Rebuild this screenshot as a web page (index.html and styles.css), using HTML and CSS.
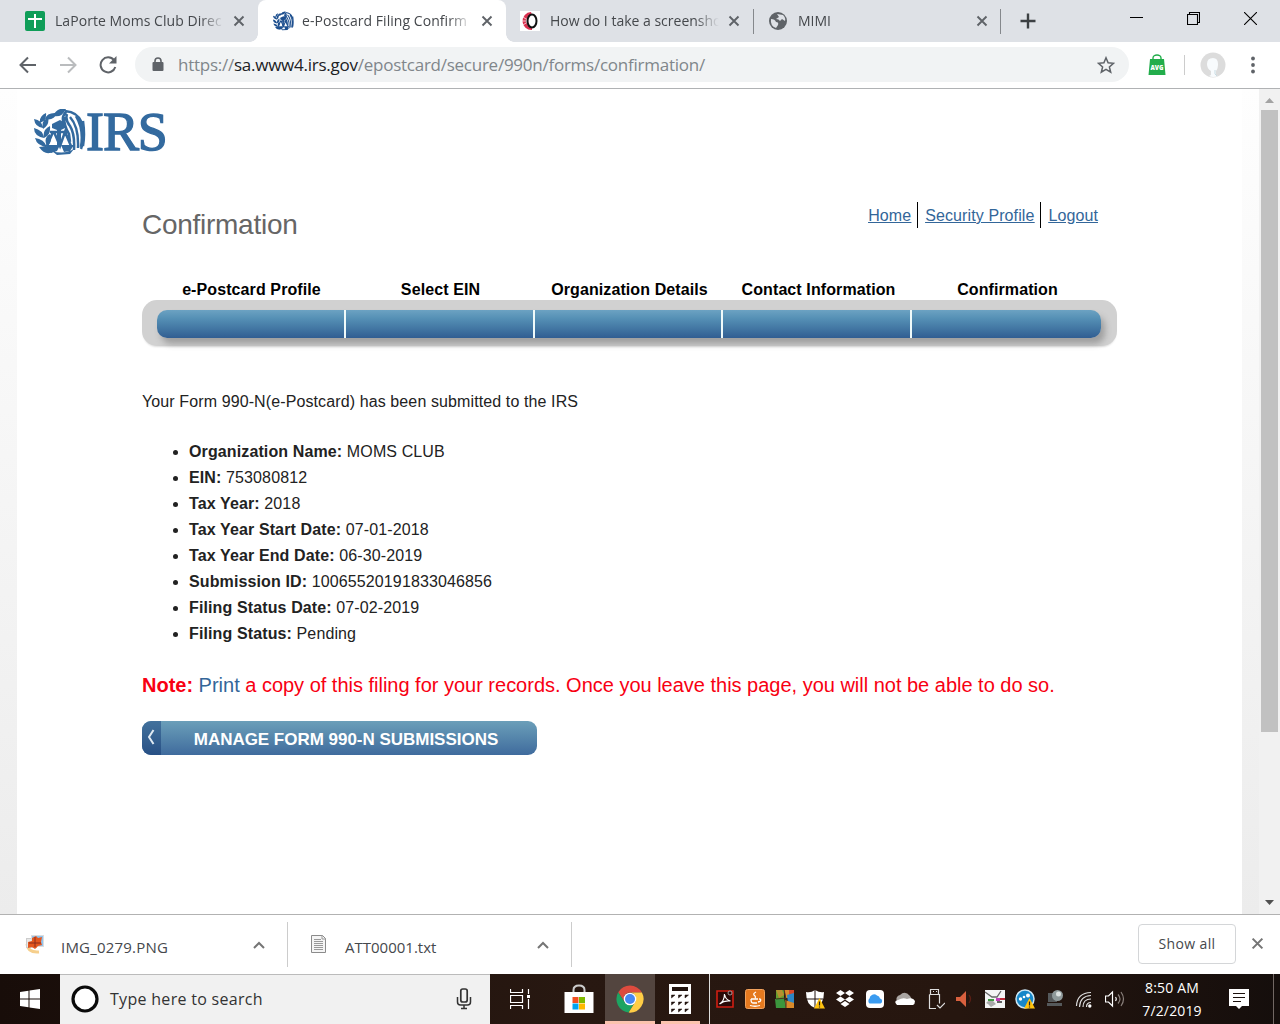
FILE: index.html
```html
<!DOCTYPE html>
<html lang="en">
<head>
<meta charset="utf-8">
<title>e-Postcard Filing Confirmation</title>
<link rel="stylesheet" href="styles.css">
</head>
<body>
<svg class="defs" width="0" height="0">
  <defs>
    <symbol id="eagle" viewBox="0 0 52 46">
      <g fill="currentColor">
        <path d="M0 10q8 1 9 9-8-1-9-9zM0 19q9 2 10 10-10-2-10-10zM1 29q9 1 12 9-10-1-12-9zM5 38q10-2 15 4-8 6-15-4zM9 20q-2-9 5-12 2 8-5 12zM10 29q-2-8 6-12 1 9-6 12zM13 37q-4-8 3-12 3 8-3 12zM11 10q2-7 12-6-3 8-12 6zM19 7q4-9 13-7-4 9-13 7zM6 14q-1-7 6-10 1 7-6 10z"/>
        <path d="M18 15l8-4 5 3v5l-4 2v15h-4V21l-5-2z"/>
        <path d="M11 36h15l-3 6-6 2zM27 36h13l-4 6-6 1zM18 42q12 4 22-2l-4 5-13 1z"/>
      </g>
      <g fill="none" stroke="currentColor" stroke-width="2.500">
        <path d="M16 23h18M19 23l-6 14M20 23l6 14 5-14 6 14M31 2q13 1 17 12 4 14-1 26M33 5q-2 6 3 12 5 8 4 24M36 8q9 10 8 31M42 7q8 13 5 31M30 8q0 9 5 17l1 8M32 3q-5 5-2 12M49 12q2 14 0 25"/>
      </g>
    </symbol>
    <symbol id="cross" viewBox="0 0 12 12"><path d="M1.5 1.5l9 9M10.5 1.5l-9 9" fill="none" stroke="currentColor" stroke-width="1.9"/></symbol>
    <symbol id="up" viewBox="0 0 12 8"><path d="M1 7l5-5 5 5" fill="none" stroke="#757575" stroke-width="2"/></symbol>
  </defs>
</svg>

<header class="tabs">
  <div class="tab tab-a">
    <svg class="fav" viewBox="0 0 20 20"><rect width="20" height="20" rx="2" fill="#0f9d58"/><path d="M9 3h2v4h6v2h-6v8H9V9H3V7h6z" fill="#fff"/></svg>
    <span class="tab-title t1">LaPorte Moms Club Direc</span>
    <svg class="x"><use href="#cross"/></svg>
  </div>
  <div class="tab tab-b">
    <svg class="fav eagle-fav"><use href="#eagle"/></svg>
    <span class="tab-title t2">e-Postcard Filing Confirm</span>
    <svg class="x"><use href="#cross"/></svg>
  </div>
  <div class="tab tab-c">
    <svg class="fav" viewBox="0 0 20 20"><rect width="20" height="20" fill="#fff"/><path d="M11 1a9 9 0 1 0 1 18V16a6 6 0 0 1 0-12z" fill="#d9304f"/><path d="M3 6l3 2M2 10h4M3 14l3-2" stroke="#fff" stroke-width=".7"/><ellipse cx="12" cy="10" rx="4.500" ry="6.500" fill="#fff" stroke="#111" stroke-width="2"/></svg>
    <span class="tab-title t3">How do I take a screensho</span>
    <svg class="x"><use href="#cross"/></svg>
  </div>
  <div class="tab tab-d">
    <svg class="fav" viewBox="0 0 20 20"><circle cx="10" cy="10" r="9" fill="#5f6368"/><path d="M3 8q4 0 5 3 3 0 2 3l-2 3q-6-2-5-9zM9 3l6 1q3 3 2 6l-3-2-2 2q-1-2-4-2l3-2z" fill="#dee1e6"/></svg>
    <span class="tab-title t4">MIMI</span>
    <svg class="x"><use href="#cross"/></svg>
  </div>
  <svg class="plus" viewBox="0 0 16 16"><path d="M8 .5v15M.5 8h15" stroke="#3c4043" stroke-width="2.400"/></svg>
  <div class="winbtns">
    <svg width="13" height="13"><path d="M0 5.500h13" stroke="#000"/></svg>
    <svg width="13" height="13"><path d="M.5 2.500h10v10h-10zM2.500 2.500v-2h10v10h-2" fill="none" stroke="#000" stroke-width="1.100"/></svg>
    <svg width="13" height="13"><path d="M0 0l13 13M13 0L0 13" stroke="#000" stroke-width="1.100"/></svg>
  </div>
</header>

<nav class="toolbar">
  <svg class="nav-ic" viewBox="0 0 18 18"><path d="M17 9H2M9 1.500L1.500 9 9 16.500" fill="none" stroke="#5f6368" stroke-width="2"/></svg>
  <svg class="nav-ic" viewBox="0 0 18 18"><path d="M1 9h15M9 1.500L16.500 9 9 16.500" fill="none" stroke="#babcbe" stroke-width="2"/></svg>
  <svg class="nav-ic" viewBox="0 0 18 18"><path d="M15 4.200A7.500 7.500 0 1 0 16.300 11" fill="none" stroke="#5f6368" stroke-width="2"/><path d="M17.500 0v7.500H10z" fill="#5f6368"/></svg>
  <div class="omnibox">
    <svg class="lock" viewBox="0 0 12 15"><rect x=".5" y="5" width="11" height="9" rx="1" fill="#5f6368"/><path d="M3 6V4a3 3 0 0 1 6 0v2" fill="none" stroke="#5f6368" stroke-width="1.600"/></svg>
    <span class="url">https://<b>sa.www4.irs.gov</b>/epostcard/secure/990n/forms/confirmation/</span>
    <svg class="star" viewBox="0 0 18 18"><path d="M9 1.800l2.100 5 5.400.5-4.100 3.600 1.300 5.300L9 13.400l-4.700 2.800 1.300-5.300-4.100-3.600 5.400-.5z" fill="none" stroke="#5f6368" stroke-width="1.500"/></svg>
  </div>
  <svg class="avg" viewBox="0 0 18 21"><path d="M2 5h14l1.500 16H.5z" fill="#22ad4b"/><path d="M5 6V4a4 3 0 0 1 8 0v2" fill="none" stroke="#22ad4b" stroke-width="1.400"/><text x="9" y="15.500" text-anchor="middle" class="avg-t">AVG</text></svg>
  <i class="tool-sep"></i>
  <svg class="avatar" viewBox="0 0 26 26"><circle cx="13" cy="13" r="12.500" fill="#dcdcdc"/><path d="M13 6q5 0 5 6 0 5-2 7v4q1 1 2 1-5 2-9 0l2-1v-4q-4-2-4-7 0-6 6-6z" fill="#f8fbfd"/><path d="M15 18v4l2 2" fill="none" stroke="#c8dbe2"/></svg>
  <svg class="dots" viewBox="0 0 4 18"><g fill="#5f6368"><circle cx="2" cy="2.500" r="1.900"/><circle cx="2" cy="9" r="1.900"/><circle cx="2" cy="15.500" r="1.900"/></g></svg>
</nav>

<div class="viewport">
  <main class="page">
    <div class="logo">
      <svg class="emblem"><use href="#eagle"/></svg><span class="logo-t">IRS</span>
    </div>
    <div class="content">
      <div class="head">
        <h1>Confirmation</h1>
        <div class="links"><a>Home</a><a>Security Profile</a><a>Logout</a></div>
      </div>
      <div class="steps"><span>e-Postcard Profile</span><span>Select EIN</span><span>Organization Details</span><span>Contact Information</span><span>Confirmation</span></div>
      <div class="track"><div class="fill"><i></i><i></i><i></i><i></i><i></i></div></div>
      <p class="msg">Your Form 990-N(e-Postcard) has been submitted to the IRS</p>
      <ul>
        <li><b>Organization Name:</b> MOMS CLUB</li>
        <li><b>EIN:</b> 753080812</li>
        <li><b>Tax Year:</b> 2018</li>
        <li><b>Tax Year Start Date:</b> 07-01-2018</li>
        <li><b>Tax Year End Date:</b> 06-30-2019</li>
        <li><b>Submission ID:</b> 10065520191833046856</li>
        <li><b>Filing Status Date:</b> 07-02-2019</li>
        <li><b>Filing Status:</b> Pending</li>
      </ul>
      <p class="note"><b>Note:</b> <a>Print</a> a copy of this filing for your records. Once you leave this page, you will not be able to do so.</p>
      <div class="button"><span class="chev"><svg width="8" height="16"><path d="M6.500 1L2 8l4.500 7" fill="none" stroke="#dfe9f2" stroke-width="2"/></svg></span><span class="label">MANAGE FORM 990-N SUBMISSIONS</span></div>
    </div>
  </main>
  <div class="scroll">
    <svg width="9" height="5"><path d="M0 5l4.500-5L9 5z" fill="#a3a3a3"/></svg>
    <div class="thumb"></div>
    <svg class="down" width="9" height="5"><path d="M0 0h9L4.500 5z" fill="#505050"/></svg>
  </div>
</div>

<section class="downloads">
  <div class="dl dl-a">
    <svg width="20" height="20"><path d="M2 10q1 9 12 8" fill="none" stroke="#f6cf8c" stroke-width="3"/><rect x="1.500" y="4.500" width="10" height="9" fill="#e8e8e8" stroke="#ccc"/><rect x="6.500" y="1.500" width="12" height="11" fill="#8fc4ef" stroke="#ddd"/><path d="M3 8l4-1V4l4-2 2 2 4-1-1 5 1 3-4 1-3 3-3-2-4 1z" fill="#e4571e"/><path d="M10 3v10M4 9h12" stroke="#8a2c1c"/></svg>
    <span class="dl-t d1">IMG_0279.PNG</span>
    <svg class="up"><use href="#up"/></svg>
  </div>
  <div class="dl dl-b">
    <svg width="20" height="20"><path d="M2.500 1.500h11l3 3v14h-14z" fill="#f5f5f5" stroke="#8b8b8b"/><path d="M5 5.500h7M5 7.500h9M5 9.500h9M5 11.500h9M5 13.500h9M5 15.500h9" stroke="#999"/><path d="M13 1v4h4" fill="none" stroke="#999"/></svg>
    <span class="dl-t d2">ATT00001.txt</span>
    <svg class="up"><use href="#up"/></svg>
  </div>
  <div class="showall"><span>Show all</span></div>
  <svg class="dl-x"><use href="#cross"/></svg>
</section>

<footer class="taskbar">
  <div class="start"><svg width="20" height="20"><path d="M0 3l8.500-1.200V9.500H0zM9.500 1.600L20 0v9.500H9.500zM0 10.500h8.500v7.700L0 17zM9.500 10.500H20V20L9.500 18.400z" fill="#fff"/></svg></div>
  <div class="search">
    <svg width="28" height="28"><circle cx="14" cy="14" r="12" fill="#fff" stroke="#0a0a0a" stroke-width="3.200"/></svg>
    <span class="search-t">Type here to search</span>
    <svg width="16" height="22"><rect x="4.800" y="1" width="6.400" height="13" rx="2" fill="none" stroke="#333" stroke-width="1.700"/><path d="M1.500 9v5q0 3 3 3h7q3 0 3-3V9M8 17v4M5 20.500h6" fill="none" stroke="#333" stroke-width="1.500"/></svg>
  </div>
  <div class="app a1"><svg width="21" height="20"><path d="M.5 0v3.500h12V0M.5 20v-3.500h12V20M.5 6.500h12v7H.500zM18.500 0v5M18.500 10v10" fill="none" stroke="#fff" stroke-width="1.200"/><path d="M17 6h3v3h-3z" fill="#fff"/></svg></div>
  <div class="app a2"><svg width="30" height="30"><path d="M9.500 8V6q0-4.500 5.500-4.500T20.500 6v2" fill="none" stroke="#ccc" stroke-width="2"/><path d="M.500 8h29v21H.500z" fill="#fff"/><path d="M8.500 13h6v6h-6z" fill="#f25022"/><path d="M15 13h6v6h-6z" fill="#7fba00"/><path d="M8.500 19.500h6v6h-6z" fill="#00a4ef"/><path d="M15 19.500h6v6h-6z" fill="#ffb900"/></svg></div>
  <div class="app a3"><svg width="28" height="28" viewBox="0 0 28 28"><path d="M2.200 7.200A13.700 13.700 0 0 1 25.900 7.500H14a6.300 6.300 0 0 0-5.600 9.200z" fill="#dd4b3e"/><path d="M2.200 7.200A13.700 13.700 0 0 0 12.700 27.600l6-10.300a6.300 6.300 0 0 1-10.500-.8z" fill="#1da462"/><path d="M25.900 7.500A13.700 13.700 0 0 1 12.700 27.600l6.800-11.200A6.300 6.300 0 0 0 14 7.500z" fill="#ffcd46"/><circle cx="14" cy="14" r="6.300" fill="#fff"/><circle cx="14" cy="14" r="5" fill="#4688f4"/></svg></div>
  <div class="app a4"><svg width="22" height="30"><path d="M0 0h22v30H0z" fill="#fff"/><path d="M3 3h16v4H3z" fill="#21130e"/><path d="M2.500 11h3.500l-3.500 3zM9.500 11h3.500l-3.500 3zM16 11h3.500l-3.500 3zM2.500 18h3.500l-3.500 3zM9.500 18h3.500l-3.500 3zM16 18h3.500l-3.500 3zM2.500 25h3.500l-3.500 3zM9.500 25h3.500l-3.500 3zM16 25h3.500l-3.500 3z" fill="#21130e" stroke="#21130e" stroke-width=".5"/></svg></div>
  <div class="tray">
    <svg viewBox="0 0 20 20"><path d="M2 2h16v16H2z" fill="#2a0a08" stroke="#d01e12" stroke-width="1.600"/><path d="M4.500 15q5-3 5-10 1 6 6 7-6-1-11 3" fill="none" stroke="#fff" stroke-width="1.200"/><circle cx="15" cy="4" r="2" fill="#2a0a08" stroke="#bbb" stroke-width=".8"/></svg>
    <svg viewBox="0 0 20 20"><rect x=".500" y=".500" width="19" height="19" rx="2" fill="#e5791f" stroke="#f0a15d"/><path d="M11 3q-4 2-1 4 1 1 0 2M6 10h7M14 10q3 0 1 2.500l-2 .5M6 10q0 4 2 4h4M5 16.500q5 1.500 10 0" fill="none" stroke="#fff" stroke-width="1.300"/></svg>
    <svg viewBox="0 0 20 20"><path d="M1 1h8v8l-8 1z" fill="#679f2f"/><path d="M1 1h6l2 5-5 3z" fill="#b5902f"/><path d="M9 1h10v7h-8z" fill="#d8482a"/><path d="M10 1h4v8h-3z" fill="#d98c2c"/><path d="M0 10l9-1 2 10H1z" fill="#3b963d"/><path d="M12 6l7-2v10h-6z" fill="#2d87c7"/><path d="M10 11l9 3v5h-8z" fill="#d98a2b"/><path d="M9 1l2 9v9M1 10l10-1" fill="none" stroke="#4b3420"/></svg>
    <svg viewBox="0 0 20 20"><path d="M10 1q5 3 9 2 0 13-9 16Q1 16 1 3q5 1 9-2z" fill="#fff"/><path d="M10 1v18M1 10h17" stroke="#21130e"/><path d="M14.500 9L20 19.500H9z" fill="#ffc20e"/><path d="M14.500 12.500v4M14.500 17.500v1" stroke="#222" stroke-width="1.200"/></svg>
    <svg viewBox="0 0 20 20"><path d="M5.500 1L10 4 5.500 7 1 4zM14.500 1L19 4l-4.500 3L10 4zM5.500 7.500l4.500 3-4.500 3-4.500-3zM14.500 7.500l4.500 3-4.500 3-4.500-3zM10 12l4.500 3L10 18l-4.500-3z" fill="#fff"/></svg>
    <svg viewBox="0 0 20 20"><rect x="1" y="1" width="18" height="18" rx="4" fill="#fff"/><path d="M4.500 14.500a3.300 3.300 0 0 1 0-5A4.500 4.500 0 0 1 12 6.500a3.800 3.800 0 0 1 3 3 2.600 2.600 0 0 1 .5 5z" fill="#3a9bf0"/></svg>
    <svg viewBox="0 0 20 20"><path d="M2 12a4 4 0 0 1 3-6q5-5 10 1l3 5z" fill="#aaa5a2"/><path d="M2 16q-4-4 1-5 5-3 9-1 6-2 8 2 0 3-2 4z" fill="#fff"/></svg>
    <svg viewBox="0 0 20 20"><path d="M5.500 5V.500h8V5M4.500 5.500h10v9M11 19.500H4.500v-14M8 2.500h1M11 2.500h1M12 16l3 3 5-5" fill="none" stroke="#ddd" stroke-width="1.200"/></svg>
    <svg viewBox="0 0 20 20"><path d="M1 8h4l6-6v16l-6-6H1z" fill="#d9603e"/><path d="M14 6q3 4 0 8" fill="none" stroke="#5b1e14" stroke-width="1.300"/></svg>
    <svg viewBox="0 0 20 20"><path d="M0 1h20v18H0z" fill="#f4f4f4"/><path d="M0 3l7 5h5l4-6" fill="none" stroke="#666" stroke-width="1.300"/><path d="M1 14q2-3 7-2l3 3-5 3-3-3z" fill="#aaa"/><path d="M3 10h6v2H3z" fill="#409a44"/><path d="M11 9h4v3h-4z" fill="#c33db9"/><path d="M15 9h5v2h-5z" fill="#bb2c38"/><path d="M12 13h5" stroke="#333" stroke-width="1.500"/></svg>
    <svg viewBox="0 0 20 20"><circle cx="10" cy="10" r="9" fill="#1687c9" stroke="#cce6f5" stroke-width="1.500"/><g fill="#fff"><circle cx="5.500" cy="10" r="1.700"/><circle cx="9" cy="8" r="1.300"/><circle cx="13" cy="6.500" r="2"/></g><path d="M14.500 9L20 19.500H9z" fill="#ffc20e"/><path d="M14.500 12.500v4M14.500 17.500v1" stroke="#222" stroke-width="1.200"/></svg>
    <svg viewBox="0 0 20 20"><path d="M3 4h9v9H3zM2 14h15v3H2z" fill="#55595b"/><circle cx="12.500" cy="6.500" r="5.500" fill="#8f9a9b"/><circle cx="13.500" cy="5" r="2.500" fill="#dce2e1"/></svg>
    <svg viewBox="0 0 20 20"><path d="M4.500 18Q5 7 16 6.500M8 18q0-8 8-8M11.500 18q0-4.500 4.500-4.500M1.500 17Q2 4 16 3.500" fill="none" stroke="#ddd" stroke-width="1.200"/><circle cx="14.800" cy="17" r="1.700" fill="#fff"/></svg>
    <svg viewBox="0 0 20 20"><path d="M.5 7h3l4-4v14l-4-4h-3zM10.500 8q1.500 2 0 4" fill="none" stroke="#fff" stroke-width="1.200"/><path d="M13 5.500q4 4.500 0 9M16 3q5 7 0 14" fill="none" stroke="#8a807c" stroke-width="1.200"/></svg>
  </div>
  <div class="clock"><span class="c1">8:50 AM</span><span class="c2">7/2/2019</span></div>
  <svg class="notif" width="20" height="20"><path d="M0 0h20v17h-7l-3 3-3-3H0z" fill="#fff"/><path d="M4 4.500h12M4 8.500h12M4 12.500h8" stroke="#1b100c" stroke-width="1.200"/></svg>
</footer>
</body>
</html>
```
FILE: styles.css
```css
* { box-sizing: border-box; }
body { margin: 0; width: 1280px; height: 1024px; overflow: hidden; display: flex; flex-direction: column; background: #fff; font-family: "Open Sans", "Noto Sans", sans-serif; color: #3c4043; }
svg { display: block; flex: none; }
.defs { position: absolute; }

.tabs { flex: none; height: 42px; background: #dee1e6; display: flex; align-items: stretch; }
.tab { display: flex; align-items: center; color: #45484c; flex: none; }
.tab-a { width: 258px; padding-left: 25px; }
.tab-b { width: 248px; padding-left: 15px; background: #fff; border-radius: 8px 8px 0 0; position: relative; }
.tab-b::before, .tab-b::after { content: ""; position: absolute; bottom: 0; width: 8px; height: 8px; }
.tab-b::before { left: -8px; background: radial-gradient(circle at 0 0, #dee1e6 7.5px, #fff 8px); }
.tab-b::after { right: -8px; background: radial-gradient(circle at 100% 0, #dee1e6 7.5px, #fff 8px); }
.tab-c { width: 247px; padding-left: 14px; }
.tab-d { width: 247px; padding-left: 15px; }
.tab-c, .tab-d { position: relative; }
.tab-c::after, .tab-d::after { content: ""; position: absolute; right: -1px; top: 9px; width: 1px; height: 25px; background: #85888c; }
.fav { width: 20px; height: 20px; }
.eagle-fav { color: #1d4f8f; width: 21px; height: 20px; }
.tab-title { margin: 0 0 2px 10px; width: 169px; font-size: 14px; white-space: nowrap; overflow: hidden; -webkit-mask-image: linear-gradient(90deg, #000 86%, transparent); mask-image: linear-gradient(90deg, #000 86%, transparent); }
.t1 { letter-spacing: .05px; }
.t2 { letter-spacing: .05px; margin-left: 8px; width: 170px; }
.t3 { letter-spacing: 0; }
.x { width: 12px; height: 12px; margin-left: 9px; color: #5f6368; }
.plus { width: 16px; height: 16px; margin: 13px 0 0 20px; }
.winbtns { display: flex; gap: 44px; margin: 12px 0 0 94px; }

.toolbar { flex: none; height: 47px; border-bottom: 1px solid #b0b2b4; display: flex; align-items: center; padding: 0 0 1px 19px; }
.nav-ic { width: 18px; height: 18px; margin-right: 22px; }
.nav-ic + .nav-ic + .nav-ic { margin-right: 18px; }
.omnibox { width: 994px; height: 35px; border-radius: 18px; background: #f1f3f4; display: flex; align-items: center; padding: 0 14px 0 17px; }
.lock { width: 12px; height: 15px; }
.url { flex: 1; margin-left: 14px; font-size: 17px; letter-spacing: -.25px; color: #80868b; white-space: nowrap; }
.url b { font-weight: 400; color: #202124; }
.star { width: 18px; height: 18px; }
.avg { width: 18px; height: 21px; margin-left: 19px; }
.avg-t { font: 800 6px "Open Sans", sans-serif; fill: #fff; }
.tool-sep { width: 1px; height: 20px; background: #ccc; margin-left: 18px; }
.avatar { width: 26px; height: 26px; margin-left: 15px; }
.dots { width: 4px; height: 18px; margin-left: 25px; }

.viewport { flex: none; height: 825px; display: flex; padding-left: 17px; background: linear-gradient(#fefefe, #ececec); }
.page { width: 1225px; background: #fff; margin-right: 17px; font-family: "Liberation Sans", Arial, sans-serif; }
.logo { display: flex; height: 80px; padding: 20px 0 0 17px; color: #336a9f; align-items: flex-start; }
.emblem { width: 52px; height: 46px; }
.logo-t { font: 54px/47px "Liberation Serif", serif; letter-spacing: -1.1px; -webkit-text-stroke: 1.3px #336a9f; }
.content { padding-left: 125px; width: 1100px; }
.head { display: flex; justify-content: space-between; padding-top: 33px; height: 111px; width: 956px; }
h1 { margin: 6px 0 0; font-size: 28px; line-height: 34px; font-weight: 400; color: #666; letter-spacing: -.27px; }
.links { display: flex; height: 26px; line-height: 28px; font-size: 16px; color: #336699; text-decoration: underline; letter-spacing: .1px; }
.links a + a { border-left: 1px solid #000; margin-left: 6px; padding-left: 7px; }
.links a { text-decoration: underline; }
.steps { display: grid; grid-template-columns: repeat(5, 189px); margin-left: 15px; height: 20px; line-height: 19px; font-size: 16px; font-weight: 700; text-align: center; color: #000; letter-spacing: .1px; }
.track { width: 975px; height: 46px; border-radius: 15px; background: #d1d1d1; padding: 10px 16px 0 15px; box-shadow: 0 2px 2px -1px #ddd; }
.fill { height: 27.5px; border-radius: 10px; display: grid; grid-template-columns: repeat(5, 1fr); background: linear-gradient(#6ca2c2, #5590b5 30%, #315e92); box-shadow: 4px 6px 6px rgba(100, 100, 100, .45); }
.fill i + i { border-left: 2.5px solid #effafa; margin-left: -2px; }
.msg { margin: 43px 0 0; font-size: 16px; line-height: 26px; color: #222; letter-spacing: .11px; }
ul { margin: 24px 0 0; padding: 0 0 0 47px; font-size: 16px; line-height: 26px; color: #222; letter-spacing: .12px; }
.note { margin: 23px 0 0; font-size: 20px; line-height: 30px; color: #f80012; white-space: nowrap; letter-spacing: -.01px; }
.note a { color: #336699; }
.button { margin-top: 21px; width: 395px; height: 34px; border-radius: 9px; overflow: hidden; display: flex; background: linear-gradient(#6b9fb9, #3f6b9d); color: #fff; }
.chev { width: 19px; padding: 8px 0 0 5px; background: linear-gradient(#42719c, #285085); }
.label { flex: 1; padding-right: 6px; text-align: center; font-size: 17px; font-weight: 700; line-height: 37px; letter-spacing: -.02px; white-space: nowrap; }
.scroll { width: 21px; background: #f1f1f1; display: flex; flex-direction: column; align-items: center; padding-top: 9px; }
.thumb { width: 17px; height: 622px; margin-top: 7px; background: #c1c1c1; }
.down { margin-top: 168px; }

.downloads { flex: none; height: 60px; border-top: 1px solid #b2b2b2; display: flex; align-items: flex-start; color: #45484c; }
.dl { display: flex; align-items: center; height: 45px; margin-top: 7px; border-right: 1px solid #ccc; }
.dl > svg:first-child { margin-top: -2px; }
.dl-a { width: 288px; padding-left: 25px; }
.dl-b { width: 284px; padding-left: 21px; }
.dl-t { font-size: 15px; width: 192px; margin: 5px 0 0 16px; white-space: nowrap; }
.d1 { letter-spacing: .2px; }
.up { width: 12px; height: 8px; }
.showall { width: 98px; height: 40px; margin: 9px 0 0 566px; border: 1px solid #d4d6d8; border-radius: 4px; font-size: 14px; line-height: 37px; text-align: center; font-weight: 500; letter-spacing: .35px; }
.dl-x { width: 13px; height: 13px; margin: 22px 0 0 15px; color: #757575; }

.taskbar { flex: none; height: 50px; background: linear-gradient(90deg, #180d09, #281811 45%, #26160f 75%, #150e0c); display: flex; color: #fff; }
.start { width: 60px; padding: 15px 0 0 20px; }
.search { width: 430px; background: #f1f1f1; border-top: 1px solid #bbb; display: flex; align-items: center; padding: 0 18px 1px 11px; }
.search-t { flex: 1; margin-left: 11px; color: #333; font-size: 16px; letter-spacing: .3px; }
.app { display: flex; align-items: flex-start; justify-content: center; }
.a1 { width: 60px; padding-top: 15px; }
.a2 { width: 55px; padding: 10px 0 0 2px; }
.a3 { width: 50px; padding-top: 11px; background: #53453f; border-bottom: 3px solid #fbc3ae; }
.a4 { width: 39px; margin: 0 9px 0 6px; padding: 10px 2px 0 0; border-bottom: 3px solid #fbc3ae; }
.tray { display: flex; gap: 10px; padding: 15px 0 0 5px; border-left: 1px solid #ddd; }
.tray svg { width: 20px; height: 20px; }
.clock { width: 76px; margin-left: 9px; padding-top: 2px; display: flex; flex-direction: column; align-items: center; font-size: 14px; line-height: 23px; white-space: nowrap; letter-spacing: .15px; }
.notif { margin: 15px 0 0 19px; }
.taskbar::after { content: ""; width: 1px; margin-left: 24px; background: #716763; }
```
